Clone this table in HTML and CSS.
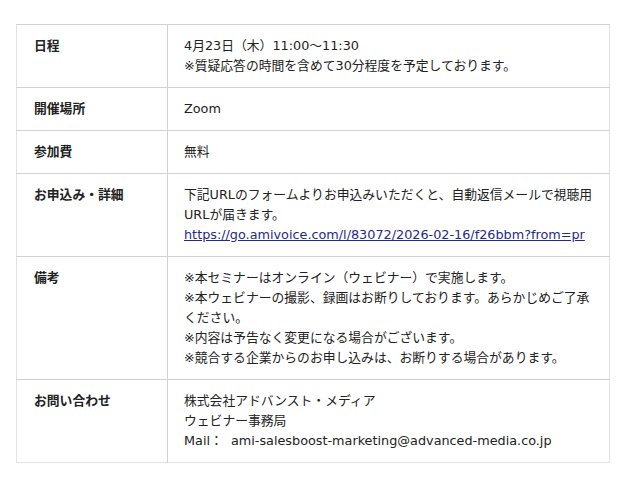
FILE: index.html
```html
<!DOCTYPE html>
<html lang="ja">
<head>
<meta charset="utf-8">
<link rel="stylesheet" href="styles.css">
</head>
<body>
<div class="wrap">
<table class="info">
<tr><th>日程</th><td>4月23日（木）11:00〜11:30<br>※質疑応答の時間を含めて30分程度を予定しております。</td></tr>
<tr><th>開催場所</th><td>Zoom</td></tr>
<tr><th>参加費</th><td>無料</td></tr>
<tr><th>お申込み・詳細</th><td>下記URLのフォームよりお申込みいただくと、自動返信メールで視聴用URLが届きます。<br><a class="link" href="#">https://go.amivoice.com/l/83072/2026-02-16/f26bbm?from=pr</a></td></tr>
<tr><th>備考</th><td>※本セミナーはオンライン（ウェビナー）で実施します。<br>※本ウェビナーの撮影、録画はお断りしております。あらかじめご了承ください。<br>※内容は予告なく変更になる場合がございます。<br>※競合する企業からのお申し込みは、お断りする場合があります。</td></tr>
<tr><th>お問い合わせ</th><td>株式会社アドバンスト・メディア<br>ウェビナー事務局<br>Mail：&nbsp;&nbsp;ami-salesboost-marketing@advanced-media.co.jp</td></tr>
</table>
</div>
</body>
</html>
```
FILE: styles.css
```css
html, body {
  margin: 0;
  padding: 0;
  background: #fff;
}
.wrap {
  padding: 24px 16px;
}
.info {
  width: 594px;
  border-collapse: collapse;
  border: 1px solid #e2e2e2;
  font-family: "DejaVu Sans", "Noto Sans CJK JP", sans-serif;
  font-size: 12.8px;
  line-height: 20px;
  color: #222;
}
.info th, .info td {
  border-top: 1px solid #d2d2d2;
  padding: 11px 8px 11px 16px;
  vertical-align: top;
  text-align: left;
}
.info th {
  width: 116px;
  font-weight: bold;
  padding-left: 17px;
  padding-right: 17px;
  border-right: 1px solid #d2d2d2;
}
.link {
  color: #1e2a8e;
  text-decoration: underline;
}
```
